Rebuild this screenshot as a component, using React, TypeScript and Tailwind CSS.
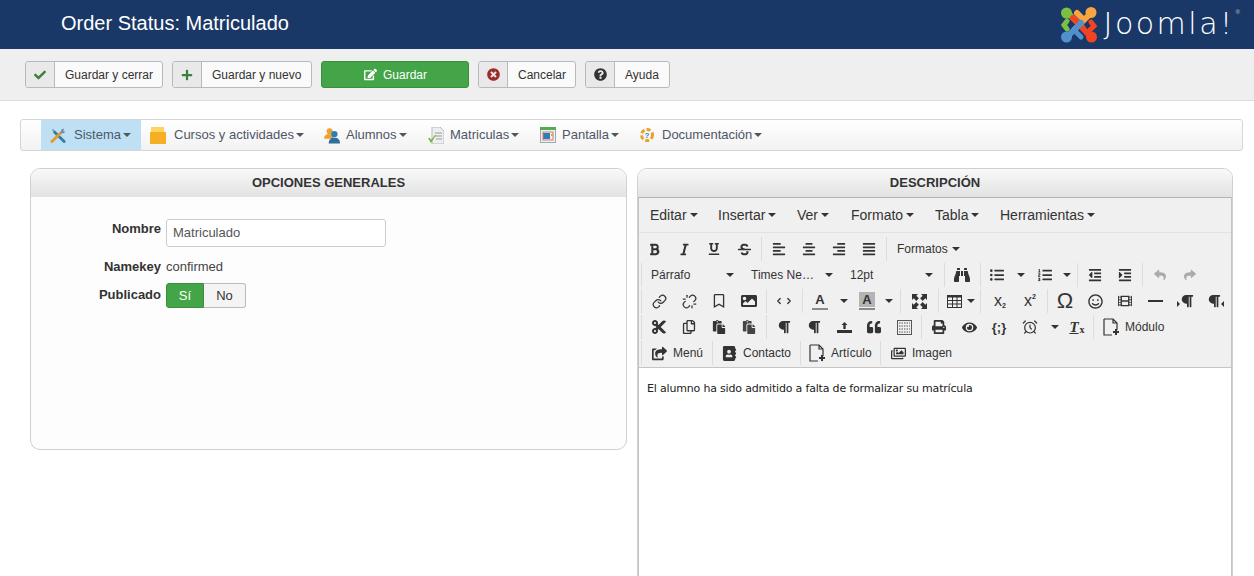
import React from "react";
import {
  FaBold, FaItalic, FaUnderline, FaStrikethrough, FaAlignLeft, FaAlignCenter, FaAlignRight, FaAlignJustify,
  FaBinoculars, FaListUl, FaListOl, FaOutdent, FaIndent, FaReply, FaShare, FaRegBookmark,
  FaImage, FaRegSmile, FaFilm, FaCut, FaRegCopy, FaPaste,
  FaParagraph, FaQuoteLeft, FaPrint, FaEye, FaCheck, FaPlus, FaEdit, FaTimesCircle, FaQuestionCircle,
  FaShareSquare, FaAddressBook, FaRegImages,
} from "react-icons/fa";
import { Link, Unlink, AlarmClock, ChevronLeft, ChevronRight } from "lucide-react";

const Caret = ({ className = "" }: { className?: string }) => (
  <span className={`inline-block w-0 h-0 border-x-[4px] border-x-transparent border-t-[4px] border-t-[#333] ${className}`} />
);

const Btn = ({ w, sep, icon, text, textPl }: { w: string; sep: string; icon: React.ReactNode; text: string; textPl: string }) => (
  <div className={`${w} h-[27px] flex rounded-[3px] border border-[#b9b9b9] bg-[#fafafa] text-[12px] text-[#333]`}>
    <div className={`${sep} shrink-0 flex items-center justify-center bg-[#e9e9e9] border-r border-[#b9b9b9] rounded-l-[3px]`}>{icon}</div>
    <div className={`flex items-center ${textPl}`}>{text}</div>
  </div>
);

const MenuItem = ({ icon, label, w, active, pl = "pl-[9px]", mr = "mr-[8px]" }: { icon: React.ReactNode; label: string; w: string; active?: boolean; pl?: string; mr?: string }) => (
  <div className={`${w} ${pl} h-full flex items-center text-[13px] ${active ? "bg-[#bfe0f4] text-[#4a5a6a]" : "text-[#4f5668]"}`}>
    <span className={`w-[16px] h-[16px] shrink-0 ${mr} flex items-center justify-center`}>{icon}</span>
    <span>{label}</span>
    <Caret className="ml-[2px] !border-t-[#555]" />
  </div>
);

const Tb = ({ children, w = "w-[30px]" }: { children?: React.ReactNode; w?: string }) => (
  <div className={`${w} h-[26px] shrink-0 flex items-center justify-center text-[14px] text-[#333]`}>{children}</div>
);
const Sep = ({ w = "w-[5px]" }: { w?: string }) => (
  <div className={`${w} h-[24px] shrink-0 flex justify-center`}><div className="w-px h-full bg-[#dcdcdc]" /></div>
);
const CaretBox = ({ w = "w-[14px]" }: { w?: string }) => (
  <div className={`${w} h-[26px] shrink-0 flex items-center justify-center`}><Caret /></div>
);
const ListBox = ({ text, w, pl }: { text: string; w: string; pl: string }) => (
  <div className={`${w} ${pl} h-[26px] shrink-0 flex items-center justify-between pr-[9px] text-[12px] text-[#333]`}>
    <span>{text}</span><Caret />
  </div>
);
const Row = ({ children, first }: { children: React.ReactNode; first?: boolean }) => (
  <div className="h-[26px] flex items-center">
    {!first && <div className="w-[3px] mr-[2px] shrink-0 h-[24px] border-r border-[#dcdcdc]" />}
    {children}
  </div>
);
const TextTool = ({ icon, text, w, pl }: { icon: React.ReactNode; text: string; w: string; pl: string }) => (
  <div className={`${w} ${pl} h-[26px] shrink-0 flex items-center text-[12px] text-[#333]`}>
    <span className="w-[20px] shrink-0 mr-[-1px] flex items-center justify-center text-[15px]">{icon}</span>
    <span className="ml-[5px]">{text}</span>
  </div>
);
const DocPlus = () => (
  <svg width="18" height="18" viewBox="0 0 18 18" fill="none" stroke="#333" strokeWidth="1.2">
    <path d="M2 1h9l4 4v7M11 1v4h4M2 1v16h8" />
    <path d="M14 11v6M11 14h6" strokeWidth="2" />
  </svg>
);
const FontColor = ({ bg }: { bg?: boolean }) => (
  <div className="relative w-[16px] h-[18px] flex flex-col items-center">
    <span className={`w-[16px] h-[15px] flex items-center justify-center font-bold text-[13px] leading-none text-[#333] ${bg ? "bg-[#b4b4b4]" : ""}`}>A</span>
    <span className="w-[16px] h-[2px] mt-[1px] bg-[#8a8a8a]" />
  </div>
);
const Template = () => (
  <svg width="15" height="15" viewBox="0 0 15 15" fill="none" stroke="#555">
    <rect x="0.5" y="0.5" width="14" height="14" />
    <path d="M2 3h11M2 6h11M2 9h11M2 12h11" strokeDasharray="1.5 1" />
  </svg>
);
const TableIcon = () => (
  <svg width="15" height="13" viewBox="0 0 15 13" fill="none" stroke="#333">
    <rect x="0.5" y="0.5" width="14" height="12" />
    <path d="M0 1.5h15" strokeWidth="2" />
    <path d="M0 5.5h15M0 9h15M5.5 1v12M10 1v12" />
  </svg>
);
const Tray = () => (
  <svg width="15" height="12" viewBox="0 0 15 12" fill="#333">
    <path d="M0 9h15v3H0z" />
    <path d="M7.5 1l3 3H8.7v4H6.3V4H4.5z" />
  </svg>
);
const Fullscreen = () => (
  <svg width="15" height="15" viewBox="0 0 15 15" fill="#333">
    <path d="M0 0h6L4.3 1.7l2.6 2.6-2.6 2.6-2.6-2.6L0 6z" />
    <path d="M15 0v6l-1.7-1.7-2.6 2.6-2.6-2.6 2.6-2.6L9 0z" />
    <path d="M0 15V9l1.7 1.7 2.6-2.6 2.6 2.6-2.6 2.6L6 15z" />
    <path d="M15 15H9l1.7-1.7-2.6-2.6 2.6-2.6 2.6 2.6L15 9z" />
  </svg>
);
const ClearFormat = () => (
  <span className="flex items-end font-['Liberation_Serif'] leading-none">
    <span className="italic font-bold text-[15px] underline">T</span>
    <span className="font-bold text-[10px] ml-[1px]">x</span>
  </span>
);
const ScriptX = ({ sup }: { sup?: boolean }) => (
  <span className={`flex leading-none text-[#333] ${sup ? "items-start" : "items-end"}`}>
    <span className="text-[16px]">x</span>
    <span className="text-[7px] font-bold">2</span>
  </span>
);
const Wrench = () => (
  <svg width="17" height="17" viewBox="0 0 17 17">
    <path d="M3 1l3 3 1 3L4 5 2 3z" fill="#8aa8bb" />
    <path d="M5 5l10 10" stroke="#2c7fa8" strokeWidth="3" strokeLinecap="round" />
    <path d="M2 15L11 6" stroke="#e79a2c" strokeWidth="3" strokeLinecap="round" />
    <path d="M11 6l1-4 3-1-1 3 2 0-1 2z" fill="#6f8da0" />
  </svg>
);
const Folder = () => (
  <svg width="16" height="17" viewBox="0 0 16 17">
    <path d="M1 0h13v5H1z" fill="#ffd45e" />
    <path d="M0 5h16v12H0z" fill="#f6ae24" />
  </svg>
);
const Users = () => (
  <svg width="17" height="17" viewBox="0 0 17 17">
    <circle cx="6" cy="4" r="3.2" fill="#f0a030" />
    <path d="M0 12c0-3 2-5 5-5s5 2 5 5z" fill="#f0a030" />
    <circle cx="11" cy="7" r="3.4" fill="#2c7fb5" />
    <path d="M5 17c0-4 2-6 6-6s6 2 6 6z" fill="#2f6f9c" />
  </svg>
);
const DocCheck = () => (
  <svg width="16" height="17" viewBox="0 0 16 17">
    <path d="M4 0h8l4 4v13H4z" fill="#eee" stroke="#bbb" />
    <path d="M7 6h7M7 9h7M8 12h6" stroke="#999" />
    <path d="M0 11l3 5 5-8-1 0-4 5-1-2z" fill="#74b72e" />
  </svg>
);
const Screen = () => (
  <svg width="16" height="16" viewBox="0 0 16 16">
    <rect x="0.5" y="0.5" width="15" height="15" fill="#eef0f2" stroke="#9aa9b2" />
    <rect x="0" y="0" width="16" height="3" fill="#4faf4f" />
    <rect x="3" y="6" width="7" height="6" fill="#2c7fb5" />
    <rect x="3" y="5" width="10" height="8" fill="none" stroke="#e07070" />
    <rect x="11" y="7" width="2" height="2" fill="#e8a030" />
  </svg>
);
const Help = () => (
  <svg width="16" height="16" viewBox="0 0 16 16">
    <circle cx="8" cy="8" r="5.5" fill="none" stroke="#e8a030" strokeWidth="3" strokeDasharray="4 2.2" />
    <text x="8" y="11" textAnchor="middle" fontSize="8" fontFamily="Liberation Sans" fill="#2c7fb5" fontWeight="700">?</text>
  </svg>
);
const JoomlaMark = () => (
  <svg width="38" height="38" viewBox="0 0 38 38" fill="none" strokeLinecap="round">
    <path d="M7 6l15 15" stroke="#7ac143" strokeWidth="6" />
    <circle cx="6.5" cy="7" r="5.5" fill="#7ac143" />
    <path d="M7 15l-3 4 3 4" stroke="#7ac143" strokeWidth="5" />
    <path d="M31 7L15 23" stroke="#f9a541" strokeWidth="6" />
    <path d="M17 7l6 6" stroke="#f9a541" strokeWidth="6" />
    <circle cx="31" cy="6.5" r="5.5" fill="#f9a541" />
    <path d="M13 12l18 19" stroke="#f44321" strokeWidth="6" />
    <path d="M31 16l3 4-4 4" stroke="#f44321" strokeWidth="5" />
    <circle cx="31.5" cy="31" r="5.5" fill="#f44321" />
    <path d="M7 31l14-14" stroke="#5091cd" strokeWidth="6" />
    <path d="M21 31l-5-5" stroke="#5091cd" strokeWidth="5" />
    <circle cx="6.5" cy="31" r="5.5" fill="#5091cd" />
  </svg>
);
const Pilcrow = ({ mode }: { mode?: "ltr" | "rtl" }) => (
  <span className="flex items-center">
    {mode === "ltr" && <span className="w-0 h-0 mt-[6px] border-y-[3px] border-y-transparent border-l-[3px] border-l-[#333]" />}
    <FaParagraph className="text-[14px]" />
    {mode === "rtl" && <span className="w-0 h-0 mt-[6px] border-y-[3px] border-y-transparent border-r-[3px] border-r-[#333]" />}
  </span>
);

export default function App() {
  return (
    <div className="w-[1254px] h-[576px] overflow-hidden bg-white text-[#333]" style={{ fontFamily: '"Liberation Sans", Arial, sans-serif' }}>
      <header className="h-[49px] bg-[#1a3867] flex items-center justify-between pl-[61px] pr-[14px]">
        <h1 className="text-[20px] text-white pb-[4px]">Order Status: Matriculado</h1>
        <div className="flex items-center">
          <JoomlaMark />
          <span className="ml-[6px] text-white text-[30px] leading-none font-extralight tracking-[2.5px] pb-[1px]" style={{ fontFamily: '"DejaVu Sans", sans-serif' }}>Joomla!</span>
          <span className="text-[6px] text-[#ccc] self-start mt-[2px] ml-[1px]">®</span>
        </div>
      </header>

      <div className="h-[52px] bg-[#efefef] border-b border-[#dedede] flex items-start pt-[12px] pl-[25px] gap-[9px]">
        <Btn w="w-[138px]" sep="w-[29px]" textPl="pl-[10px]" text="Guardar y cerrar" icon={<FaCheck className="text-[12px] text-[#3f7d3f]" />} />
        <Btn w="w-[140px]" sep="w-[29px]" textPl="pl-[10px]" text="Guardar y nuevo" icon={<FaPlus className="text-[12px] text-[#3f7d3f]" />} />
        <div className="w-[148px] h-[27px] rounded-[3px] bg-[#43a547] border border-[#3a8f3e] text-white text-[12px] flex items-center justify-center gap-[6px] pl-[1px]">
          <FaEdit className="text-[13px]" /><span>Guardar</span>
        </div>
        <Btn w="w-[98px]" sep="w-[29px]" textPl="pl-[10px]" text="Cancelar" icon={<FaTimesCircle className="text-[13px] text-[#9b2c2c]" />} />
        <Btn w="w-[85px]" sep="w-[29px]" textPl="pl-[10px]" text="Ayuda" icon={<FaQuestionCircle className="text-[13px] text-[#333]" />} />
      </div>

      <main className="pt-[18px] pl-[20px] pr-[11px]">
        <nav className="h-[32px] rounded-[3px] border border-[#d6d6d6] bg-gradient-to-b from-white to-[#f2f2f2] flex pl-[20px]">
          <MenuItem active w="w-[100px]" label="Sistema" icon={<Wrench />} />
          <MenuItem w="w-[172px]" label="Cursos y actividades" icon={<Folder />} />
          <MenuItem w="w-[104px]" pl="pl-[11px]" mr="mr-[6px]" label="Alumnos" icon={<Users />} />
          <MenuItem w="w-[112px]" pl="pl-[11px]" mr="mr-[6px]" label="Matriculas" icon={<DocCheck />} />
          <MenuItem w="w-[100px]" pl="pl-[11px]" mr="mr-[6px]" label="Pantalla" icon={<Screen />} />
          <MenuItem w="w-[160px]" pl="pl-[10px]" mr="mr-[7px]" label="Documentación" icon={<Help />} />
        </nav>

        <div className="flex gap-[10px] mt-[17px] ml-[10px]">
          <section className="w-[597px] h-[282px] border border-[#d0d0d0] rounded-[10px] bg-[#fdfdfd] overflow-hidden">
            <div className="h-[28px] bg-gradient-to-b from-[#f9f9f9] to-[#e2e2e2] flex items-center justify-center text-[13px] font-bold text-[#333]">OPCIONES GENERALES</div>
            <div className="pt-[22px]">
              <div className="flex items-start">
                <label className="w-[130px] text-right text-[13px] font-bold">Nombre</label>
                <div className="ml-[5px] w-[220px] h-[28px] border border-[#ccc] rounded-[3px] bg-white flex items-center pl-[6px] text-[13px] text-[#555]">Matriculado</div>
              </div>
              <div className="flex items-center mt-[10px] h-[19px]">
                <label className="w-[130px] text-right text-[13px] font-bold">Namekey</label>
                <span className="ml-[5px] text-[13px] text-[#444]">confirmed</span>
              </div>
              <div className="flex items-start mt-[7px]">
                <label className="w-[130px] text-right text-[13px] font-bold pt-[2px]">Publicado</label>
                <div className="ml-[5px] flex h-[25px] text-[13px]">
                  <span className="w-[38px] bg-[#43a547] text-white flex items-center justify-center rounded-l-[3px] border border-[#3a8f3e]">Sí</span>
                  <span className="w-[42px] bg-[#f4f4f4] text-[#333] flex items-center justify-center rounded-r-[3px] border border-l-0 border-[#bbb]">No</span>
                </div>
              </div>
            </div>
          </section>

          <section className="w-[596px] h-[700px] border border-[#d0d0d0] rounded-t-[10px] bg-white overflow-hidden">
            <div className="h-[28px] bg-gradient-to-b from-[#f9f9f9] to-[#e2e2e2] flex items-center justify-center text-[13px] font-bold text-[#333]">DESCRIPCIÓN</div>
            <div className="border border-[#c5c5c5] border-t-[#b5b5b5] h-full">
              <div className="bg-[#f0f0f0] border-b border-[#c5c5c5]">
                <div className="h-[35px] flex items-center pl-[11px] text-[14px] text-[#333] border-b border-[#e2e2e2]">
                  <span className="w-[68px] flex items-center">Editar<Caret className="ml-[3px]" /></span>
                  <span className="w-[79px] flex items-center">Insertar<Caret className="ml-[3px]" /></span>
                  <span className="w-[54px] flex items-center">Ver<Caret className="ml-[3px]" /></span>
                  <span className="w-[84px] flex items-center">Formato<Caret className="ml-[3px]" /></span>
                  <span className="w-[65px] flex items-center">Tabla<Caret className="ml-[3px]" /></span>
                  <span className="flex items-center">Herramientas<Caret className="ml-[3px]" /></span>
                </div>
                <div className="pt-[3px] pb-[1px]">
                  <Row first>
                    <Tb><FaBold className="text-[13px]" /></Tb>
                    <Tb><FaItalic className="text-[13px]" /></Tb>
                    <Tb><FaUnderline className="text-[12px]" /></Tb>
                    <Tb><FaStrikethrough className="text-[13px]" /></Tb>
                    <Sep />
                    <Tb><FaAlignLeft /></Tb><Tb><FaAlignCenter /></Tb><Tb><FaAlignRight /></Tb><Tb><FaAlignJustify /></Tb>
                    <Sep />
                    <div className="ml-[8px] flex items-center text-[12px]">Formatos<Caret className="ml-[4px]" /></div>
                  </Row>
                  <Row>
                    <ListBox text="Párrafo" w="w-[99px]" pl="pl-[7px]" />
                    <ListBox text="Times Ne…" w="w-[99px]" pl="pl-[8px]" />
                    <ListBox text="12pt" w="w-[100px]" pl="pl-[8px]" />
                    <Sep />
                    <Tb><FaBinoculars className="text-[16px]" /></Tb>
                    <Sep w="w-[6px]" />
                    <Tb w="w-[28px]"><FaListUl /></Tb><CaretBox w="w-[20px]" />
                    <Tb w="w-[28px]"><FaListOl /></Tb><CaretBox w="w-[16px]" />
                    <Sep />
                    <Tb><FaOutdent /></Tb><Tb><FaIndent /></Tb>
                    <Sep />
                    <Tb><FaReply className="text-[12px] text-[#aaa]" /></Tb><Tb><FaShare className="text-[12px] text-[#aaa]" /></Tb>
                  </Row>
                  <Row>
                    <Tb><Link size={15} strokeWidth={2} /></Tb><Tb><Unlink size={15} strokeWidth={2} /></Tb><Tb><FaRegBookmark /></Tb><Tb><FaImage className="text-[16px]" /></Tb>
                    <Sep />
                    <Tb><ChevronLeft size={10} strokeWidth={3} /><ChevronRight size={10} strokeWidth={3} /></Tb>
                    <Sep w="w-[7px]" />
                    <Tb w="w-[28px]"><FontColor /></Tb><CaretBox w="w-[19px]" />
                    <Tb w="w-[28px]"><FontColor bg /></Tb><CaretBox w="w-[16px]" />
                    <Sep w="w-[7px]" />
                    <Tb><Fullscreen /></Tb>
                    <Sep w="w-[9px]" />
                    <Tb w="w-[22px]"><TableIcon /></Tb><CaretBox w="w-[11px]" />
                    <Sep w="w-[9px]" />
                    <Tb><ScriptX /></Tb><Tb><ScriptX sup /></Tb>
                    <Sep />
                    <Tb><span className="text-[22px] leading-none">Ω</span></Tb>
                    <Tb><FaRegSmile className="text-[15px]" /></Tb>
                    <Tb><FaFilm /></Tb>
                    <Tb><span className="w-[15px] h-[2px] bg-[#333]" /></Tb>
                    <Tb><Pilcrow mode="ltr" /></Tb>
                    <Tb><Pilcrow mode="rtl" /></Tb>
                  </Row>
                  <Row>
                    <Tb><FaCut className="text-[16px]" /></Tb><Tb><FaRegCopy /></Tb><Tb><FaPaste /></Tb><Tb><FaPaste className="text-[#444]" /></Tb>
                    <Sep />
                    <Tb><Pilcrow /></Tb><Tb><Pilcrow /></Tb>
                    <Tb><Tray /></Tb>
                    <Tb><FaQuoteLeft /></Tb>
                    <Tb><Template /></Tb>
                    <Sep />
                    <Tb><FaPrint /></Tb><Tb><FaEye className="text-[15px]" /></Tb>
                    <Tb><span className="text-[13px] font-bold leading-none">{"{;}"}</span></Tb>
                    <Tb w="w-[32px]"><AlarmClock size={16} strokeWidth={1.8} /></Tb><CaretBox w="w-[17px]" />
                    <Tb w="w-[28px]"><ClearFormat /></Tb>
                    <Sep />
                    <TextTool w="w-[90px]" pl="pl-[5px]" icon={<DocPlus />} text="Módulo" />
                  </Row>
                  <Row>
                    <TextTool w="w-[68px]" pl="pl-[5px]" icon={<FaShareSquare />} text="Menú" />
                    <Sep w="w-[1px]" />
                    <TextTool w="w-[87px]" pl="pl-[6px]" icon={<FaAddressBook />} text="Contacto" />
                    <Sep w="w-[1px]" />
                    <TextTool w="w-[79px]" pl="pl-[6px]" icon={<DocPlus />} text="Artículo" />
                    <Sep w="w-[1px]" />
                    <TextTool w="w-[90px]" pl="pl-[7px]" icon={<FaRegImages />} text="Imagen" />
                  </Row>
                </div>
              </div>
              <p className="pl-[8px] pt-[13px] text-[11px] leading-[16px] tracking-[-0.18px] text-[#222]" style={{ fontFamily: '"DejaVu Sans", Verdana, sans-serif' }}>El alumno ha sido admitido a falta de formalizar su matrícula</p>
            </div>
          </section>
        </div>
      </main>
    </div>
  );
}
